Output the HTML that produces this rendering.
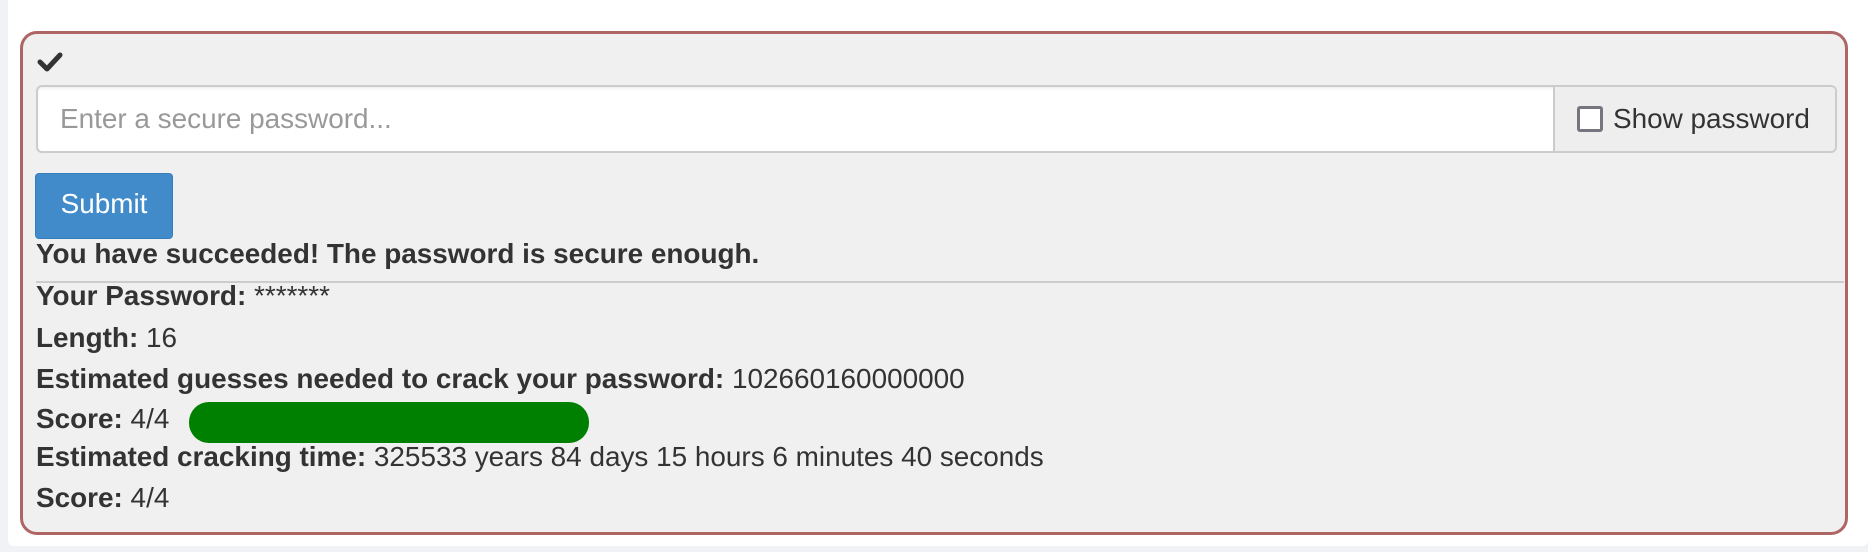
<!DOCTYPE html>
<html><head><style>
html,body{margin:0;padding:0}
body{width:1868px;height:552px;background:#f1f2f6;position:relative;overflow:hidden;font-family:"Liberation Sans",sans-serif;color:#333}
.card{position:absolute;left:8px;top:0;width:1860px;height:546px;background:#fff;border-radius:0 0 6px 6px}
.panel{position:absolute;left:20px;top:31px;width:1822px;height:498px;border:3px solid #b06565;border-radius:17px;background:#f0f0f0}
.chk{position:absolute;left:14px;top:17px}
.inp{position:absolute;left:13px;top:51px;width:1797px;height:64px;border:2px solid #ccc;border-radius:6px;background:#fff;box-shadow:inset 0 2px 2px rgba(0,0,0,.06);overflow:hidden}
.ph{position:absolute;left:22px;top:0;line-height:64px;font-size:27.9px;color:#999}
.addon{position:absolute;right:0;top:0;width:280px;height:64px;background:#eee;border-left:2px solid #ccc}
.box{position:absolute;left:22px;top:19px;width:20px;height:20px;border:3px solid #767680;border-radius:3px;background:#fff}
.sp{position:absolute;left:58px;top:0;line-height:64px;font-size:27.9px;color:#333}
.btn{position:absolute;left:12px;top:139px;width:136px;height:64px;background:#428bca;border:1px solid #357ebd;border-radius:4px;color:#fff;font-size:27.9px;line-height:60px;text-align:center}
.t{position:absolute;left:13px;font-size:27.9px;white-space:nowrap}
b{font-weight:bold}
.hr{position:absolute;left:13px;top:247px;width:1808px;height:2px;background:#ccc}
.bar{position:absolute;left:166px;top:368px;width:400px;height:41px;background:#008000;border-radius:20px}
</style></head><body>
<div class="card"></div>
<div class="panel">
<svg class="chk" width="26" height="22" viewBox="0 0 26 22"><path d="M3 11 L10 18 L23 4" fill="none" stroke="#333" stroke-width="5" stroke-linecap="round" stroke-linejoin="round"/></svg>
<div class="inp"><div class="ph">Enter a secure password...</div><div class="addon"><div class="box"></div><div class="sp">Show password</div></div></div>
<div class="btn">Submit</div>
<div class="t" style="top:204px;font-weight:bold;">You have succeeded! The password is secure enough.</div>
<div class="hr"></div>
<div class="t" style="top:246px"><b>Your Password:</b> *******</div>
<div class="t" style="top:288px"><b>Length:</b> 16</div>
<div class="t" style="top:329px"><b>Estimated guesses needed to crack your password:</b> 102660160000000</div>
<div class="t" style="top:369px"><b>Score:</b> 4/4</div>
<div class="bar"></div>
<div class="t" style="top:407px"><b>Estimated cracking time:</b> 325533 years 84 days 15 hours 6 minutes 40 seconds</div>
<div class="t" style="top:448px"><b>Score:</b> 4/4</div>
</div>
</body></html>
